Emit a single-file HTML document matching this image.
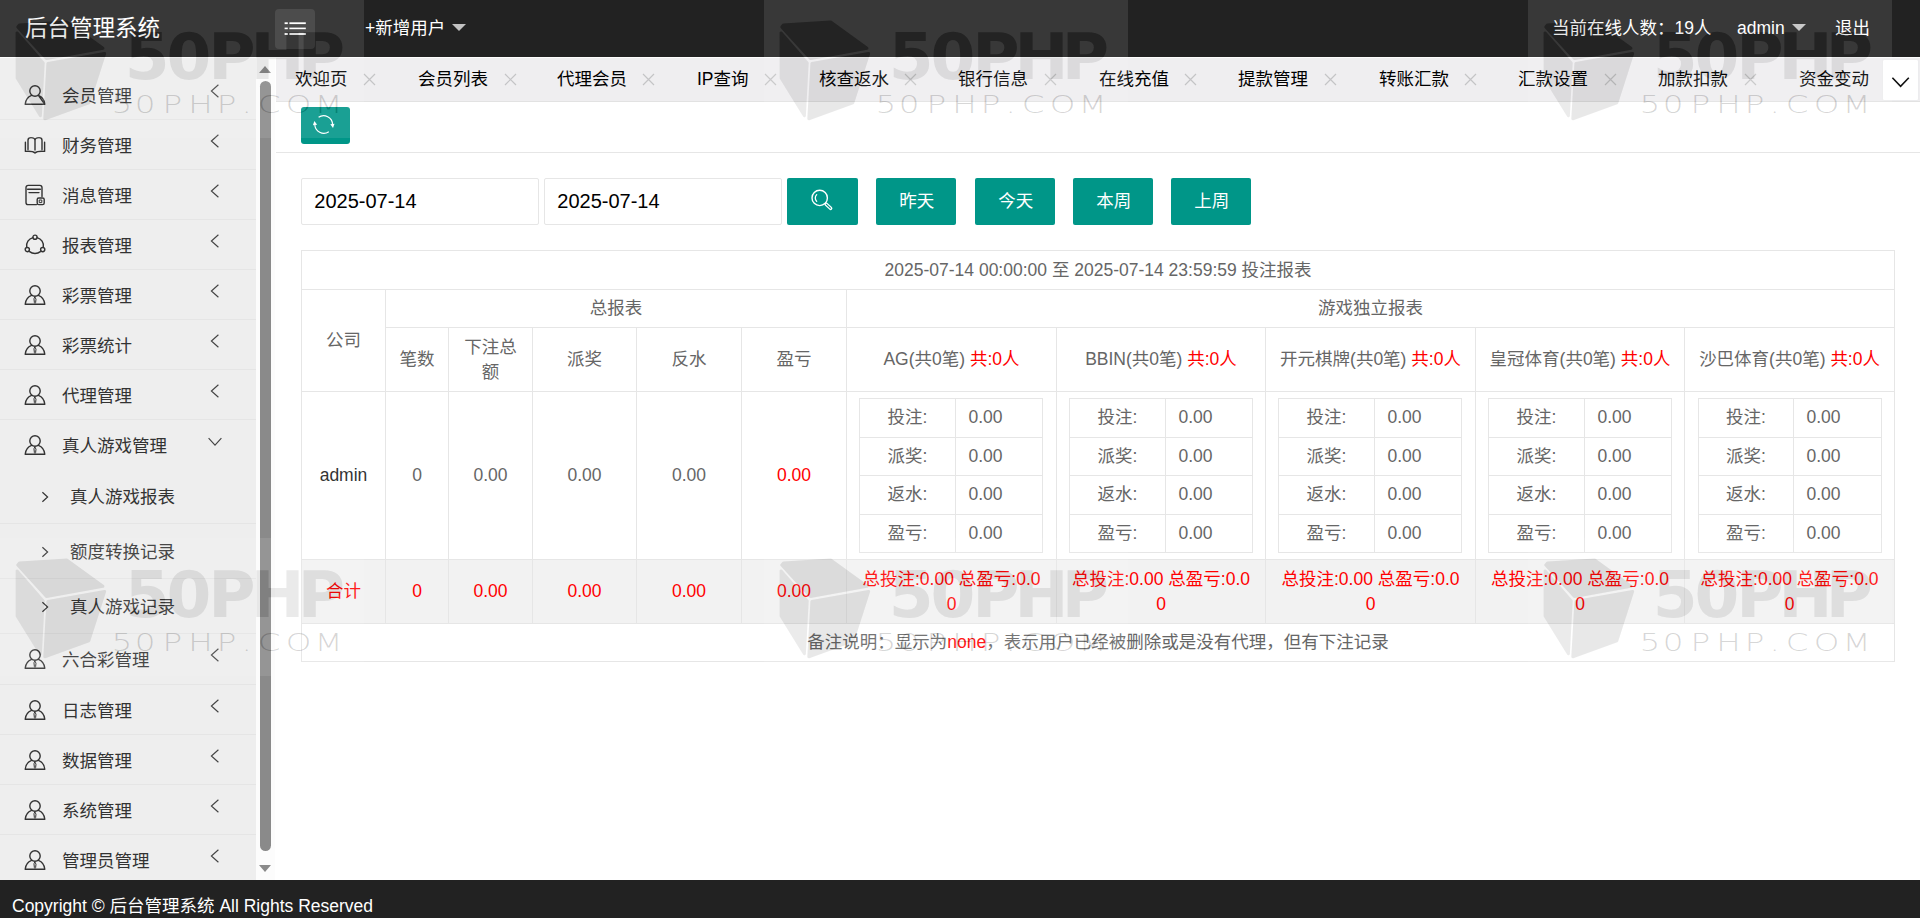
<!DOCTYPE html>
<html lang="zh-CN">
<head>
<meta charset="utf-8">
<title>后台管理系统</title>
<style>
*{box-sizing:border-box;margin:0;padding:0}
html,body{width:1920px;height:918px;overflow:hidden;background:#fff}
body{font-family:"Liberation Sans","Noto Sans CJK SC",sans-serif;font-size:17.5px;color:#333;position:relative}
ul{list-style:none}
/* header */
.hd{position:absolute;left:0;top:0;width:1920px;height:57px;background:#222;color:#fff}
.logo{position:absolute;left:25px;top:0;line-height:58px;font-size:22.5px;color:#fff;white-space:nowrap}
.ham{position:absolute;left:275px;top:9px;width:40px;height:40px;border-radius:4px;background:rgba(255,255,255,.1)}
.ham svg{position:absolute;left:0;top:0}
.hnav{position:absolute;top:0;line-height:56px;font-size:17.5px;color:#fff;white-space:nowrap}
.caret{position:absolute;width:0;height:0;border-left:7px solid transparent;border-right:7px solid transparent;border-top:7px solid #c2c2c2}
.hl{position:absolute;left:0;top:57px;width:1920px;height:1px;background:rgba(255,255,255,.85);z-index:5}
/* sidebar */
.side{position:absolute;left:0;top:57px;width:275px;height:823px;background:#eee;border-right:1px solid #e5e5e5}
.nav{position:absolute;left:0;top:13px;width:256px}
.nav>li{height:50px;border-bottom:1px solid #e5e5e5;position:relative}
.nav>li.open{height:auto}
.nav>li.open+li{height:51px}
.nav .it{height:49px;position:relative}
.nav .tx{position:absolute;left:62px;top:0;line-height:52px;font-size:17.5px;color:#333;white-space:nowrap}
.nav .ic{position:absolute;left:24px;top:13.5px}
.nav .ar{position:absolute;left:208px;top:12.8px}
.sub li{height:55px;border-bottom:1px solid #e5e5e5;position:relative}
.sub li:last-child{border-bottom:none;height:54px}
.sub .tx{left:70px;line-height:56px}
.sub .ar2{position:absolute;left:40px;top:21px}
/* scrollbar */
.sb{position:absolute;left:256px;top:0;width:19px;height:823px;background:#fcfcfc}
.sb .th{position:absolute;left:4px;top:24px;width:11px;height:770px;border-radius:5.5px;background:#8a8a8a}
.sb .up,.sb .dn{position:absolute;left:2.75px;width:0;height:0;border-left:6.75px solid transparent;border-right:6.75px solid transparent}
.sb .up{top:9px;border-bottom:7px solid #8a8a8a}
.sb .dn{top:808px;border-top:7px solid #8a8a8a}
/* tabs */
.tabs{position:absolute;left:276px;top:57px;width:1644px;height:45px;background:#efeef0;border-bottom:1px solid #e2e2e2;overflow:hidden}
.tabs .t{position:absolute;top:0;line-height:45px;font-size:17.5px;color:#000;white-space:nowrap}
.tabs .x{position:absolute;top:16px}
.tabs .more{position:absolute;left:1606px;top:2px;width:37px;height:42px;background:#fff;border:1px solid #ececee;border-radius:2px}
.tabs .more svg{position:absolute;left:-1px;top:-1px}
/* body */
.main{position:absolute;left:276px;top:102px;width:1644px;height:778px;background:#fff}
.btn{position:absolute;background:#009688;color:#fff;border-radius:2px;text-align:center;font-size:17.5px;line-height:47px;height:47px;top:76px}
.btn.t2{padding-left:1.5px}
.inp{position:absolute;top:76px;height:47px;width:238px;border:1px solid #e6e6e6;border-radius:2px;line-height:44px;padding-left:12.3px;font-size:20px;color:#000;background:#fff}
.hr{position:absolute;left:0;top:50px;width:1644px;height:1px;background:#e6e6e6}
/* table */
table{border-collapse:separate;border-spacing:0}
.tb{position:absolute;left:25px;top:148px;width:1594px;table-layout:fixed;color:#666;font-size:17.5px;text-align:center;border-left:1px solid #e6e6e6;border-top:1px solid #e6e6e6}
.tb td,.tb th{border-right:1px solid #e6e6e6;border-bottom:1px solid #e6e6e6;font-weight:normal;padding:0;line-height:25px;vertical-align:middle}
.tb .r1 td{height:39px}
.tb .r2 td{height:38px}
.tb .r3 td{height:64px}
.tb .r4>td{height:168px}
.tb .r5 td{height:64px}
.tb .r6 td{height:38px}
.red{color:#f00}
.dk{color:#333}
.in{margin:0 0 0 12px;width:184px;table-layout:fixed;border-left:1px solid #e6e6e6;border-top:1px solid #e6e6e6}
.in tr:nth-child(odd) td,.in tr:nth-child(odd) th{height:39px;padding-bottom:1px}
.in tr:nth-child(even) td,.in tr:nth-child(even) th{height:38px}
.in td{text-align:left;padding-left:12.5px !important}
.tb .r4>td:last-child .in{margin-left:13px}
.tot td{background:#f2f2f2;color:#f00}
/* footer */
.ft{position:absolute;left:0;top:880px;width:1920px;height:38px;background:#222;color:#fff;font-size:17.5px;line-height:52px;padding-left:12px;white-space:nowrap;overflow:hidden}
/* watermark */
.wm{position:absolute;width:364px;height:138px;pointer-events:none;overflow:hidden;z-index:50}
.wm svg{display:block}
</style>
</head>
<body>
<div class="hd">
  <div class="logo">后台管理系统</div>
  <div class="ham"><svg width="40" height="40" viewBox="0 0 40 40"><g fill="#fff"><rect x="9.6" y="13.3" width="3.2" height="1.8"/><rect x="14.4" y="13.3" width="16.4" height="1.8"/><rect x="9.6" y="18.6" width="3.2" height="1.6"/><rect x="14.4" y="18.6" width="16.4" height="1.6"/><rect x="9.6" y="24.1" width="3.2" height="1.8"/><rect x="14.4" y="24.1" width="16.4" height="1.8"/></g></svg></div>
  <div class="hnav" style="left:365px">+新增用户</div><i class="caret" style="left:452px;top:24px"></i>
  <div class="hnav" style="left:1552px">当前在线人数：19人</div>
  <div class="hnav" style="left:1737px">admin</div><i class="caret" style="left:1792px;top:24px"></i>
  <div class="hnav" style="left:1835px">退出</div>
</div>

<div class="hl"></div>
<div class="side">
  <ul class="nav">
<li><div class="it"><svg class="ic" width="22" height="22" viewBox="0 0 22 22"><g fill="none" stroke="#333" stroke-width="1.4" stroke-linecap="round" stroke-linejoin="round"><circle cx="11" cy="7" r="5.2"/><path d="M1.2 20.3 C1.6 15.4 4.6 12.6 7.6 11.4 M14.4 11.4 C17.4 12.6 20.4 15.4 20.8 20.3 Z M1.2 20.3 H20.8"/></g></svg><span class="tx">会员管理</span><svg class="ar" width="14" height="16" viewBox="0 0 14 16"><path d="M10.4 1.8 L3.4 8 L10.4 14.2" fill="none" stroke="#444" stroke-width="1.15"/></svg></div></li>
<li><div class="it"><svg class="ic" width="22" height="22" viewBox="0 0 22 22"><g fill="none" stroke="#333" stroke-width="1.4" stroke-linecap="round" stroke-linejoin="round"><path d="M4 15.5 V6.2 C4 4.6 5.4 3.6 7 3.6 C9 3.6 11 4.6 11 6.4 V16 M11 6.4 C11 4.6 13 3.6 15 3.6 C16.6 3.6 18 4.6 18 6.2 V15.5 M1.4 8.2 V17.4 C4.5 17.2 8.6 16.8 11 18.9 C13.4 16.8 17.5 17.2 20.6 17.4 V8.2"/></g></svg><span class="tx">财务管理</span><svg class="ar" width="14" height="16" viewBox="0 0 14 16"><path d="M10.4 1.8 L3.4 8 L10.4 14.2" fill="none" stroke="#444" stroke-width="1.15"/></svg></div></li>
<li><div class="it"><svg class="ic" width="22" height="22" viewBox="0 0 22 22"><g fill="none" stroke="#333" stroke-width="1.4" stroke-linecap="round" stroke-linejoin="round"><path d="M12.5 20.6 H4.2 C2.8 20.6 2 19.8 2 18.4 V3.6 C2 2.2 2.8 1.4 4.2 1.4 H15.8 C17.2 1.4 18 2.2 18 3.6 V12.5"/><path d="M3.6 5.2 H16.4 M5 8.6 H15"/><rect x="13.2" y="14" width="7" height="6.6" rx="1.6"/><path d="M15.6 16 h2.2 v2.6 h-2.2 z" stroke-width="1"/></g></svg><span class="tx">消息管理</span><svg class="ar" width="14" height="16" viewBox="0 0 14 16"><path d="M10.4 1.8 L3.4 8 L10.4 14.2" fill="none" stroke="#444" stroke-width="1.15"/></svg></div></li>
<li><div class="it"><svg class="ic" width="22" height="22" viewBox="0 0 22 22"><g fill="none" stroke="#333" stroke-width="1.4" stroke-linecap="round" stroke-linejoin="round"><path d="M8.9 3.6 A8.4 8.4 0 0 0 2.7 13.2 M5.6 17.6 A8.4 8.4 0 0 0 16.4 17.6 M19.3 13.2 A8.4 8.4 0 0 0 13.1 3.6"/><circle cx="11" cy="3.2" r="2.1"/><circle cx="3.3" cy="15.6" r="2.1"/><circle cx="18.7" cy="15.6" r="2.1"/></g></svg><span class="tx">报表管理</span><svg class="ar" width="14" height="16" viewBox="0 0 14 16"><path d="M10.4 1.8 L3.4 8 L10.4 14.2" fill="none" stroke="#444" stroke-width="1.15"/></svg></div></li>
<li><div class="it"><svg class="ic" width="22" height="22" viewBox="0 0 22 22"><g fill="none" stroke="#333" stroke-width="1.4" stroke-linecap="round" stroke-linejoin="round"><circle cx="11" cy="7" r="5.2"/><path d="M1.2 20.3 C1.6 15.4 4.6 12.6 7.6 11.4 M14.4 11.4 C17.4 12.6 20.4 15.4 20.8 20.3 M1.2 20.3 H20.8"/><path d="M11 13.2 L12 15.2 L11.6 18.6 L11 19.4 L10.4 18.6 L10 15.2 Z" stroke-width="1"/></g></svg><span class="tx">彩票管理</span><svg class="ar" width="14" height="16" viewBox="0 0 14 16"><path d="M10.4 1.8 L3.4 8 L10.4 14.2" fill="none" stroke="#444" stroke-width="1.15"/></svg></div></li>
<li><div class="it"><svg class="ic" width="22" height="22" viewBox="0 0 22 22"><g fill="none" stroke="#333" stroke-width="1.4" stroke-linecap="round" stroke-linejoin="round"><circle cx="11" cy="7" r="5.2"/><path d="M1.2 20.3 C1.6 15.4 4.6 12.6 7.6 11.4 M14.4 11.4 C17.4 12.6 20.4 15.4 20.8 20.3 M1.2 20.3 H20.8"/><path d="M11 13.2 L12 15.2 L11.6 18.6 L11 19.4 L10.4 18.6 L10 15.2 Z" stroke-width="1"/></g></svg><span class="tx">彩票统计</span><svg class="ar" width="14" height="16" viewBox="0 0 14 16"><path d="M10.4 1.8 L3.4 8 L10.4 14.2" fill="none" stroke="#444" stroke-width="1.15"/></svg></div></li>
<li><div class="it"><svg class="ic" width="22" height="22" viewBox="0 0 22 22"><g fill="none" stroke="#333" stroke-width="1.4" stroke-linecap="round" stroke-linejoin="round"><circle cx="11" cy="7" r="5.2"/><path d="M1.2 20.3 C1.6 15.4 4.6 12.6 7.6 11.4 M14.4 11.4 C17.4 12.6 20.4 15.4 20.8 20.3 M1.2 20.3 H20.8"/><path d="M11 13.2 L12 15.2 L11.6 18.6 L11 19.4 L10.4 18.6 L10 15.2 Z" stroke-width="1"/></g></svg><span class="tx">代理管理</span><svg class="ar" width="14" height="16" viewBox="0 0 14 16"><path d="M10.4 1.8 L3.4 8 L10.4 14.2" fill="none" stroke="#444" stroke-width="1.15"/></svg></div></li>
<li class="open"><div class="it"><svg class="ic" width="22" height="22" viewBox="0 0 22 22"><g fill="none" stroke="#333" stroke-width="1.4" stroke-linecap="round" stroke-linejoin="round"><circle cx="11" cy="7" r="5.2"/><path d="M1.2 20.3 C1.6 15.4 4.6 12.6 7.6 11.4 M14.4 11.4 C17.4 12.6 20.4 15.4 20.8 20.3 M1.2 20.3 H20.8"/><path d="M11 13.2 L12 15.2 L11.6 18.6 L11 19.4 L10.4 18.6 L10 15.2 Z" stroke-width="1"/></g></svg><span class="tx">真人游戏管理</span><svg class="ar" style="left:207px;top:16px" width="16" height="12" viewBox="0 0 16 12"><path d="M1.6 2.2 L8 9.2 L14.4 2.2" fill="none" stroke="#444" stroke-width="1.15"/></svg></div><ul class="sub"><li><svg class="ar2" width="10" height="14" viewBox="0 0 10 14"><path d="M2.4 2.2 L7.6 7 L2.4 11.8" fill="none" stroke="#333" stroke-width="1.2"/></svg><span class="tx">真人游戏报表</span></li><li><svg class="ar2" width="10" height="14" viewBox="0 0 10 14"><path d="M2.4 2.2 L7.6 7 L2.4 11.8" fill="none" stroke="#333" stroke-width="1.2"/></svg><span class="tx">额度转换记录</span></li><li><svg class="ar2" width="10" height="14" viewBox="0 0 10 14"><path d="M2.4 2.2 L7.6 7 L2.4 11.8" fill="none" stroke="#333" stroke-width="1.2"/></svg><span class="tx">真人游戏记录</span></li></ul></li>
<li><div class="it"><svg class="ic" width="22" height="22" viewBox="0 0 22 22"><g fill="none" stroke="#333" stroke-width="1.4" stroke-linecap="round" stroke-linejoin="round"><circle cx="11" cy="7" r="5.2"/><path d="M1.2 20.3 C1.6 15.4 4.6 12.6 7.6 11.4 M14.4 11.4 C17.4 12.6 20.4 15.4 20.8 20.3 M1.2 20.3 H20.8"/><path d="M11 13.2 L12 15.2 L11.6 18.6 L11 19.4 L10.4 18.6 L10 15.2 Z" stroke-width="1"/></g></svg><span class="tx">六合彩管理</span><svg class="ar" width="14" height="16" viewBox="0 0 14 16"><path d="M10.4 1.8 L3.4 8 L10.4 14.2" fill="none" stroke="#444" stroke-width="1.15"/></svg></div></li>
<li><div class="it"><svg class="ic" width="22" height="22" viewBox="0 0 22 22"><g fill="none" stroke="#333" stroke-width="1.4" stroke-linecap="round" stroke-linejoin="round"><circle cx="11" cy="7" r="5.2"/><path d="M1.2 20.3 C1.6 15.4 4.6 12.6 7.6 11.4 M14.4 11.4 C17.4 12.6 20.4 15.4 20.8 20.3 M1.2 20.3 H20.8"/><path d="M11 13.2 L12 15.2 L11.6 18.6 L11 19.4 L10.4 18.6 L10 15.2 Z" stroke-width="1"/></g></svg><span class="tx">日志管理</span><svg class="ar" width="14" height="16" viewBox="0 0 14 16"><path d="M10.4 1.8 L3.4 8 L10.4 14.2" fill="none" stroke="#444" stroke-width="1.15"/></svg></div></li>
<li><div class="it"><svg class="ic" width="22" height="22" viewBox="0 0 22 22"><g fill="none" stroke="#333" stroke-width="1.4" stroke-linecap="round" stroke-linejoin="round"><circle cx="11" cy="7" r="5.2"/><path d="M1.2 20.3 C1.6 15.4 4.6 12.6 7.6 11.4 M14.4 11.4 C17.4 12.6 20.4 15.4 20.8 20.3 M1.2 20.3 H20.8"/><path d="M11 13.2 L12 15.2 L11.6 18.6 L11 19.4 L10.4 18.6 L10 15.2 Z" stroke-width="1"/></g></svg><span class="tx">数据管理</span><svg class="ar" width="14" height="16" viewBox="0 0 14 16"><path d="M10.4 1.8 L3.4 8 L10.4 14.2" fill="none" stroke="#444" stroke-width="1.15"/></svg></div></li>
<li><div class="it"><svg class="ic" width="22" height="22" viewBox="0 0 22 22"><g fill="none" stroke="#333" stroke-width="1.4" stroke-linecap="round" stroke-linejoin="round"><circle cx="11" cy="7" r="5.2"/><path d="M1.2 20.3 C1.6 15.4 4.6 12.6 7.6 11.4 M14.4 11.4 C17.4 12.6 20.4 15.4 20.8 20.3 M1.2 20.3 H20.8"/><path d="M11 13.2 L12 15.2 L11.6 18.6 L11 19.4 L10.4 18.6 L10 15.2 Z" stroke-width="1"/></g></svg><span class="tx">系统管理</span><svg class="ar" width="14" height="16" viewBox="0 0 14 16"><path d="M10.4 1.8 L3.4 8 L10.4 14.2" fill="none" stroke="#444" stroke-width="1.15"/></svg></div></li>
<li><div class="it"><svg class="ic" width="22" height="22" viewBox="0 0 22 22"><g fill="none" stroke="#333" stroke-width="1.4" stroke-linecap="round" stroke-linejoin="round"><circle cx="11" cy="7" r="5.2"/><path d="M1.2 20.3 C1.6 15.4 4.6 12.6 7.6 11.4 M14.4 11.4 C17.4 12.6 20.4 15.4 20.8 20.3 M1.2 20.3 H20.8"/><path d="M11 13.2 L12 15.2 L11.6 18.6 L11 19.4 L10.4 18.6 L10 15.2 Z" stroke-width="1"/></g></svg><span class="tx">管理员管理</span><svg class="ar" width="14" height="16" viewBox="0 0 14 16"><path d="M10.4 1.8 L3.4 8 L10.4 14.2" fill="none" stroke="#444" stroke-width="1.15"/></svg></div></li>
</ul>
  <div class="sb"><i class="up"></i><div class="th"></div><i class="dn"></i></div>
</div>

<div class="tabs">
<span class="t" style="left:19px">欢迎页</span>
<svg class="x" style="left:87px" width="13" height="13" viewBox="0 0 13 13"><path d="M1 1 L12 12 M12 1 L1 12" stroke="#c4c4c6" stroke-width="1.2" fill="none"/></svg>
<span class="t" style="left:142px">会员列表</span>
<svg class="x" style="left:228px" width="13" height="13" viewBox="0 0 13 13"><path d="M1 1 L12 12 M12 1 L1 12" stroke="#c4c4c6" stroke-width="1.2" fill="none"/></svg>
<span class="t" style="left:281px">代理会员</span>
<svg class="x" style="left:366px" width="13" height="13" viewBox="0 0 13 13"><path d="M1 1 L12 12 M12 1 L1 12" stroke="#c4c4c6" stroke-width="1.2" fill="none"/></svg>
<span class="t" style="left:421px">IP查询</span>
<svg class="x" style="left:488px" width="13" height="13" viewBox="0 0 13 13"><path d="M1 1 L12 12 M12 1 L1 12" stroke="#c4c4c6" stroke-width="1.2" fill="none"/></svg>
<span class="t" style="left:543px">核查返水</span>
<svg class="x" style="left:628px" width="13" height="13" viewBox="0 0 13 13"><path d="M1 1 L12 12 M12 1 L1 12" stroke="#c4c4c6" stroke-width="1.2" fill="none"/></svg>
<span class="t" style="left:682px">银行信息</span>
<svg class="x" style="left:768px" width="13" height="13" viewBox="0 0 13 13"><path d="M1 1 L12 12 M12 1 L1 12" stroke="#c4c4c6" stroke-width="1.2" fill="none"/></svg>
<span class="t" style="left:823px">在线充值</span>
<svg class="x" style="left:908px" width="13" height="13" viewBox="0 0 13 13"><path d="M1 1 L12 12 M12 1 L1 12" stroke="#c4c4c6" stroke-width="1.2" fill="none"/></svg>
<span class="t" style="left:962px">提款管理</span>
<svg class="x" style="left:1048px" width="13" height="13" viewBox="0 0 13 13"><path d="M1 1 L12 12 M12 1 L1 12" stroke="#c4c4c6" stroke-width="1.2" fill="none"/></svg>
<span class="t" style="left:1103px">转账汇款</span>
<svg class="x" style="left:1188px" width="13" height="13" viewBox="0 0 13 13"><path d="M1 1 L12 12 M12 1 L1 12" stroke="#c4c4c6" stroke-width="1.2" fill="none"/></svg>
<span class="t" style="left:1242px">汇款设置</span>
<svg class="x" style="left:1328px" width="13" height="13" viewBox="0 0 13 13"><path d="M1 1 L12 12 M12 1 L1 12" stroke="#c4c4c6" stroke-width="1.2" fill="none"/></svg>
<span class="t" style="left:1382px">加款扣款</span>
<svg class="x" style="left:1468px" width="13" height="13" viewBox="0 0 13 13"><path d="M1 1 L12 12 M12 1 L1 12" stroke="#c4c4c6" stroke-width="1.2" fill="none"/></svg>
<span class="t" style="left:1523px">资金变动</span>
<div class="more"><svg width="37" height="42" viewBox="0 0 37 42"><path d="M10.4 18.8 L18.6 27.4 L26.8 18.8" fill="none" stroke="#111" stroke-width="1.6"/></svg></div>
</div>

<div class="main">
  <div class="btn" style="left:25px;top:5px;width:49px;height:37px;border-radius:3px"><svg width="49" height="37" viewBox="0 0 49 37" style="display:block"><g fill="none" stroke="#fff" stroke-width="1.2"><path d="M17.6 10.2 A9 9 0 0 1 31.6 17.4"/><path d="M27.8 24.8 A9 9 0 0 1 13.8 17.6"/></g><g fill="#fff"><path d="M29.3 17.3 L33.5 16.7 L32 21 Z"/><path d="M16.1 17.7 L11.9 18.3 L13.4 14 Z"/></g></svg></div>
  <div class="hr"></div>
  <div class="inp" style="left:25px">2025-07-14</div>
  <div class="inp" style="left:268px">2025-07-14</div>
  <div class="btn" style="left:511px;width:71px"><svg width="71" height="47" viewBox="0 0 71 47" style="display:block"><g fill="none" stroke="#fff" stroke-linecap="round"><circle cx="32.7" cy="19.9" r="7.7" stroke-width="1.4"/><path d="M29.7 16.6 A4.8 4.8 0 0 0 29.7 23.4" stroke-width="1.3"/><path d="M39.2 26.2 L43.6 30.3" stroke-width="3.6"/><path d="M39.4 26.4 L43.4 30.1" stroke-width="1.2" stroke="#009688"/></g></svg></div>
  <div class="btn t2" style="left:600px;width:80px">昨天</div>
  <div class="btn t2" style="left:699px;width:80px">今天</div>
  <div class="btn t2" style="left:797px;width:80px">本周</div>
  <div class="btn t2" style="left:895px;width:80px">上周</div>
  <table class="tb"><colgroup><col style="width:84px"><col style="width:63px"><col style="width:84px"><col style="width:104px"><col style="width:105px"><col style="width:105px"><col style="width:210px"><col style="width:209px"><col style="width:210px"><col style="width:209px"><col style="width:210px"></colgroup>
<tr class="r1"><td colspan="11">2025-07-14 00:00:00 至 2025-07-14 23:59:59 投注报表</td></tr>
<tr class="r2"><td rowspan="2">公司</td><td colspan="5">总报表</td><td colspan="5">游戏独立报表</td></tr>
<tr class="r3"><td>笔数</td><td>下注总<br>额</td><td>派奖</td><td>反水</td><td>盈亏</td><td>AG(共0笔) <span class="red">共:0人</span></td><td>BBIN(共0笔) <span class="red">共:0人</span></td><td>开元棋牌(共0笔) <span class="red">共:0人</span></td><td>皇冠体育(共0笔) <span class="red">共:0人</span></td><td>沙巴体育(共0笔) <span class="red">共:0人</span></td></tr>
<tr class="r4"><td class="dk">admin</td><td>0</td><td>0.00</td><td>0.00</td><td>0.00</td><td class="red">0.00</td><td><table class="in"><colgroup><col style="width:96px"><col style="width:87px"></colgroup><tr><th>投注:</th><td>0.00</td></tr><tr><th>派奖:</th><td>0.00</td></tr><tr><th>返水:</th><td>0.00</td></tr><tr><th>盈亏:</th><td>0.00</td></tr></table></td><td><table class="in"><colgroup><col style="width:96px"><col style="width:87px"></colgroup><tr><th>投注:</th><td>0.00</td></tr><tr><th>派奖:</th><td>0.00</td></tr><tr><th>返水:</th><td>0.00</td></tr><tr><th>盈亏:</th><td>0.00</td></tr></table></td><td><table class="in"><colgroup><col style="width:96px"><col style="width:87px"></colgroup><tr><th>投注:</th><td>0.00</td></tr><tr><th>派奖:</th><td>0.00</td></tr><tr><th>返水:</th><td>0.00</td></tr><tr><th>盈亏:</th><td>0.00</td></tr></table></td><td><table class="in"><colgroup><col style="width:96px"><col style="width:87px"></colgroup><tr><th>投注:</th><td>0.00</td></tr><tr><th>派奖:</th><td>0.00</td></tr><tr><th>返水:</th><td>0.00</td></tr><tr><th>盈亏:</th><td>0.00</td></tr></table></td><td><table class="in"><colgroup><col style="width:95px"><col style="width:88px"></colgroup><tr><th>投注:</th><td>0.00</td></tr><tr><th>派奖:</th><td>0.00</td></tr><tr><th>返水:</th><td>0.00</td></tr><tr><th>盈亏:</th><td>0.00</td></tr></table></td></tr>
<tr class="r5 tot"><td>合计</td><td>0</td><td>0.00</td><td>0.00</td><td>0.00</td><td>0.00</td><td>总投注:0.00 总盈亏:0.0<br>0</td><td>总投注:0.00 总盈亏:0.0<br>0</td><td>总投注:0.00 总盈亏:0.0<br>0</td><td>总投注:0.00 总盈亏:0.0<br>0</td><td>总投注:0.00 总盈亏:0.0<br>0</td></tr>
<tr class="r6"><td colspan="11">备注说明：显示为<span class="red">none</span>，表示用户已经被删除或是没有代理，但有下注记录</td></tr>
</table>
</div>

<div class="ft">Copyright © 后台管理系统 All Rights Reserved</div>
<div class="wm" style="left:0px;top:0px"><svg width="364" height="138" viewBox="0 0 364 138">
<defs><mask id="wmk0"><rect width="364" height="138" fill="#fff"/><polygon points="19.5,24.9 17.8,26.9 46.5,58.4 102.9,48.3 67.0,22.1" fill="#000" stroke="#000" stroke-width="3" stroke-linejoin="round" opacity="1"/><polygon points="17.1,33.0 17.1,78.0 40.4,115.7 43.2,62.9" fill="#000" stroke="#000" stroke-width="3" stroke-linejoin="round" opacity="1"/><polygon points="47.9,63.5 44.8,118.8 88.8,102.8 104.6,53.5" fill="#000" stroke="#000" stroke-width="3" stroke-linejoin="round" opacity="1"/><text x="124.8 166.6 208.2 250.6 297.8" y="79.3" font-family="DejaVu Sans, Liberation Sans, sans-serif" font-weight="bold" font-size="64.5" fill="#000" fill-opacity="1">50PHP</text>
<text transform="scale(1.3,1)" x="85.7 103.6 125.1 144.8 166.7 185.8 198.2 219.8 242" y="113.2" font-family="DejaVu Sans, Liberation Sans, sans-serif" font-weight="200" font-size="25.1" fill="#000" fill-opacity="1">50PHP.COM</text></mask></defs>
<rect width="364" height="138" fill="#fff" fill-opacity=".1" mask="url(#wmk0)"/>
<polygon points="19.5,24.9 17.8,26.9 46.5,58.4 102.9,48.3 67.0,22.1" fill="#2d2d2d" stroke="#2d2d2d" stroke-width="3" stroke-linejoin="round" opacity="0.11"/><polygon points="17.1,33.0 17.1,78.0 40.4,115.7 43.2,62.9" fill="#2d2d2d" stroke="#2d2d2d" stroke-width="3" stroke-linejoin="round" opacity="0.09"/><polygon points="47.9,63.5 44.8,118.8 88.8,102.8 104.6,53.5" fill="#2d2d2d" stroke="#2d2d2d" stroke-width="3" stroke-linejoin="round" opacity="0.1"/><text x="124.8 166.6 208.2 250.6 297.8" y="79.3" font-family="DejaVu Sans, Liberation Sans, sans-serif" font-weight="bold" font-size="64.5" fill="#2d2d2d" fill-opacity="0.1">50PHP</text>
<text transform="scale(1.3,1)" x="85.7 103.6 125.1 144.8 166.7 185.8 198.2 219.8 242" y="113.2" font-family="DejaVu Sans, Liberation Sans, sans-serif" font-weight="200" font-size="25.1" fill="#2d2d2d" fill-opacity="0.2">50PHP.COM</text>
</svg></div><div class="wm" style="left:764px;top:0px"><svg width="364" height="138" viewBox="0 0 364 138">
<defs><mask id="wmk1"><rect width="364" height="138" fill="#fff"/><polygon points="19.5,24.9 17.8,26.9 46.5,58.4 102.9,48.3 67.0,22.1" fill="#000" stroke="#000" stroke-width="3" stroke-linejoin="round" opacity="1"/><polygon points="17.1,33.0 17.1,78.0 40.4,115.7 43.2,62.9" fill="#000" stroke="#000" stroke-width="3" stroke-linejoin="round" opacity="1"/><polygon points="47.9,63.5 44.8,118.8 88.8,102.8 104.6,53.5" fill="#000" stroke="#000" stroke-width="3" stroke-linejoin="round" opacity="1"/><text x="124.8 166.6 208.2 250.6 297.8" y="79.3" font-family="DejaVu Sans, Liberation Sans, sans-serif" font-weight="bold" font-size="64.5" fill="#000" fill-opacity="1">50PHP</text>
<text transform="scale(1.3,1)" x="85.7 103.6 125.1 144.8 166.7 185.8 198.2 219.8 242" y="113.2" font-family="DejaVu Sans, Liberation Sans, sans-serif" font-weight="200" font-size="25.1" fill="#000" fill-opacity="1">50PHP.COM</text></mask></defs>
<rect width="364" height="138" fill="#fff" fill-opacity=".1" mask="url(#wmk1)"/>
<polygon points="19.5,24.9 17.8,26.9 46.5,58.4 102.9,48.3 67.0,22.1" fill="#2d2d2d" stroke="#2d2d2d" stroke-width="3" stroke-linejoin="round" opacity="0.11"/><polygon points="17.1,33.0 17.1,78.0 40.4,115.7 43.2,62.9" fill="#2d2d2d" stroke="#2d2d2d" stroke-width="3" stroke-linejoin="round" opacity="0.09"/><polygon points="47.9,63.5 44.8,118.8 88.8,102.8 104.6,53.5" fill="#2d2d2d" stroke="#2d2d2d" stroke-width="3" stroke-linejoin="round" opacity="0.1"/><text x="124.8 166.6 208.2 250.6 297.8" y="79.3" font-family="DejaVu Sans, Liberation Sans, sans-serif" font-weight="bold" font-size="64.5" fill="#2d2d2d" fill-opacity="0.1">50PHP</text>
<text transform="scale(1.3,1)" x="85.7 103.6 125.1 144.8 166.7 185.8 198.2 219.8 242" y="113.2" font-family="DejaVu Sans, Liberation Sans, sans-serif" font-weight="200" font-size="25.1" fill="#2d2d2d" fill-opacity="0.2">50PHP.COM</text>
</svg></div><div class="wm" style="left:1528px;top:0px"><svg width="364" height="138" viewBox="0 0 364 138">
<defs><mask id="wmk2"><rect width="364" height="138" fill="#fff"/><polygon points="19.5,24.9 17.8,26.9 46.5,58.4 102.9,48.3 67.0,22.1" fill="#000" stroke="#000" stroke-width="3" stroke-linejoin="round" opacity="1"/><polygon points="17.1,33.0 17.1,78.0 40.4,115.7 43.2,62.9" fill="#000" stroke="#000" stroke-width="3" stroke-linejoin="round" opacity="1"/><polygon points="47.9,63.5 44.8,118.8 88.8,102.8 104.6,53.5" fill="#000" stroke="#000" stroke-width="3" stroke-linejoin="round" opacity="1"/><text x="124.8 166.6 208.2 250.6 297.8" y="79.3" font-family="DejaVu Sans, Liberation Sans, sans-serif" font-weight="bold" font-size="64.5" fill="#000" fill-opacity="1">50PHP</text>
<text transform="scale(1.3,1)" x="85.7 103.6 125.1 144.8 166.7 185.8 198.2 219.8 242" y="113.2" font-family="DejaVu Sans, Liberation Sans, sans-serif" font-weight="200" font-size="25.1" fill="#000" fill-opacity="1">50PHP.COM</text></mask></defs>
<rect width="364" height="138" fill="#fff" fill-opacity=".1" mask="url(#wmk2)"/>
<polygon points="19.5,24.9 17.8,26.9 46.5,58.4 102.9,48.3 67.0,22.1" fill="#2d2d2d" stroke="#2d2d2d" stroke-width="3" stroke-linejoin="round" opacity="0.11"/><polygon points="17.1,33.0 17.1,78.0 40.4,115.7 43.2,62.9" fill="#2d2d2d" stroke="#2d2d2d" stroke-width="3" stroke-linejoin="round" opacity="0.09"/><polygon points="47.9,63.5 44.8,118.8 88.8,102.8 104.6,53.5" fill="#2d2d2d" stroke="#2d2d2d" stroke-width="3" stroke-linejoin="round" opacity="0.1"/><text x="124.8 166.6 208.2 250.6 297.8" y="79.3" font-family="DejaVu Sans, Liberation Sans, sans-serif" font-weight="bold" font-size="64.5" fill="#2d2d2d" fill-opacity="0.1">50PHP</text>
<text transform="scale(1.3,1)" x="85.7 103.6 125.1 144.8 166.7 185.8 198.2 219.8 242" y="113.2" font-family="DejaVu Sans, Liberation Sans, sans-serif" font-weight="200" font-size="25.1" fill="#2d2d2d" fill-opacity="0.2">50PHP.COM</text>
</svg></div><div class="wm" style="left:0px;top:538px"><svg width="364" height="138" viewBox="0 0 364 138">
<defs><mask id="wmk3"><rect width="364" height="138" fill="#fff"/><polygon points="19.5,24.9 17.8,26.9 46.5,58.4 102.9,48.3 67.0,22.1" fill="#000" stroke="#000" stroke-width="3" stroke-linejoin="round" opacity="1"/><polygon points="17.1,33.0 17.1,78.0 40.4,115.7 43.2,62.9" fill="#000" stroke="#000" stroke-width="3" stroke-linejoin="round" opacity="1"/><polygon points="47.9,63.5 44.8,118.8 88.8,102.8 104.6,53.5" fill="#000" stroke="#000" stroke-width="3" stroke-linejoin="round" opacity="1"/><text x="124.8 166.6 208.2 250.6 297.8" y="79.3" font-family="DejaVu Sans, Liberation Sans, sans-serif" font-weight="bold" font-size="64.5" fill="#000" fill-opacity="1">50PHP</text>
<text transform="scale(1.3,1)" x="85.7 103.6 125.1 144.8 166.7 185.8 198.2 219.8 242" y="113.2" font-family="DejaVu Sans, Liberation Sans, sans-serif" font-weight="200" font-size="25.1" fill="#000" fill-opacity="1">50PHP.COM</text></mask></defs>
<rect width="364" height="138" fill="#fff" fill-opacity=".1" mask="url(#wmk3)"/>
<polygon points="19.5,24.9 17.8,26.9 46.5,58.4 102.9,48.3 67.0,22.1" fill="#2d2d2d" stroke="#2d2d2d" stroke-width="3" stroke-linejoin="round" opacity="0.11"/><polygon points="17.1,33.0 17.1,78.0 40.4,115.7 43.2,62.9" fill="#2d2d2d" stroke="#2d2d2d" stroke-width="3" stroke-linejoin="round" opacity="0.09"/><polygon points="47.9,63.5 44.8,118.8 88.8,102.8 104.6,53.5" fill="#2d2d2d" stroke="#2d2d2d" stroke-width="3" stroke-linejoin="round" opacity="0.1"/><text x="124.8 166.6 208.2 250.6 297.8" y="79.3" font-family="DejaVu Sans, Liberation Sans, sans-serif" font-weight="bold" font-size="64.5" fill="#2d2d2d" fill-opacity="0.1">50PHP</text>
<text transform="scale(1.3,1)" x="85.7 103.6 125.1 144.8 166.7 185.8 198.2 219.8 242" y="113.2" font-family="DejaVu Sans, Liberation Sans, sans-serif" font-weight="200" font-size="25.1" fill="#2d2d2d" fill-opacity="0.2">50PHP.COM</text>
</svg></div><div class="wm" style="left:764px;top:538px"><svg width="364" height="138" viewBox="0 0 364 138">
<defs><mask id="wmk4"><rect width="364" height="138" fill="#fff"/><polygon points="19.5,24.9 17.8,26.9 46.5,58.4 102.9,48.3 67.0,22.1" fill="#000" stroke="#000" stroke-width="3" stroke-linejoin="round" opacity="1"/><polygon points="17.1,33.0 17.1,78.0 40.4,115.7 43.2,62.9" fill="#000" stroke="#000" stroke-width="3" stroke-linejoin="round" opacity="1"/><polygon points="47.9,63.5 44.8,118.8 88.8,102.8 104.6,53.5" fill="#000" stroke="#000" stroke-width="3" stroke-linejoin="round" opacity="1"/><text x="124.8 166.6 208.2 250.6 297.8" y="79.3" font-family="DejaVu Sans, Liberation Sans, sans-serif" font-weight="bold" font-size="64.5" fill="#000" fill-opacity="1">50PHP</text>
<text transform="scale(1.3,1)" x="85.7 103.6 125.1 144.8 166.7 185.8 198.2 219.8 242" y="113.2" font-family="DejaVu Sans, Liberation Sans, sans-serif" font-weight="200" font-size="25.1" fill="#000" fill-opacity="1">50PHP.COM</text></mask></defs>
<rect width="364" height="138" fill="#fff" fill-opacity=".1" mask="url(#wmk4)"/>
<polygon points="19.5,24.9 17.8,26.9 46.5,58.4 102.9,48.3 67.0,22.1" fill="#2d2d2d" stroke="#2d2d2d" stroke-width="3" stroke-linejoin="round" opacity="0.11"/><polygon points="17.1,33.0 17.1,78.0 40.4,115.7 43.2,62.9" fill="#2d2d2d" stroke="#2d2d2d" stroke-width="3" stroke-linejoin="round" opacity="0.09"/><polygon points="47.9,63.5 44.8,118.8 88.8,102.8 104.6,53.5" fill="#2d2d2d" stroke="#2d2d2d" stroke-width="3" stroke-linejoin="round" opacity="0.1"/><text x="124.8 166.6 208.2 250.6 297.8" y="79.3" font-family="DejaVu Sans, Liberation Sans, sans-serif" font-weight="bold" font-size="64.5" fill="#2d2d2d" fill-opacity="0.1">50PHP</text>
<text transform="scale(1.3,1)" x="85.7 103.6 125.1 144.8 166.7 185.8 198.2 219.8 242" y="113.2" font-family="DejaVu Sans, Liberation Sans, sans-serif" font-weight="200" font-size="25.1" fill="#2d2d2d" fill-opacity="0.2">50PHP.COM</text>
</svg></div><div class="wm" style="left:1528px;top:538px"><svg width="364" height="138" viewBox="0 0 364 138">
<defs><mask id="wmk5"><rect width="364" height="138" fill="#fff"/><polygon points="19.5,24.9 17.8,26.9 46.5,58.4 102.9,48.3 67.0,22.1" fill="#000" stroke="#000" stroke-width="3" stroke-linejoin="round" opacity="1"/><polygon points="17.1,33.0 17.1,78.0 40.4,115.7 43.2,62.9" fill="#000" stroke="#000" stroke-width="3" stroke-linejoin="round" opacity="1"/><polygon points="47.9,63.5 44.8,118.8 88.8,102.8 104.6,53.5" fill="#000" stroke="#000" stroke-width="3" stroke-linejoin="round" opacity="1"/><text x="124.8 166.6 208.2 250.6 297.8" y="79.3" font-family="DejaVu Sans, Liberation Sans, sans-serif" font-weight="bold" font-size="64.5" fill="#000" fill-opacity="1">50PHP</text>
<text transform="scale(1.3,1)" x="85.7 103.6 125.1 144.8 166.7 185.8 198.2 219.8 242" y="113.2" font-family="DejaVu Sans, Liberation Sans, sans-serif" font-weight="200" font-size="25.1" fill="#000" fill-opacity="1">50PHP.COM</text></mask></defs>
<rect width="364" height="138" fill="#fff" fill-opacity=".1" mask="url(#wmk5)"/>
<polygon points="19.5,24.9 17.8,26.9 46.5,58.4 102.9,48.3 67.0,22.1" fill="#2d2d2d" stroke="#2d2d2d" stroke-width="3" stroke-linejoin="round" opacity="0.11"/><polygon points="17.1,33.0 17.1,78.0 40.4,115.7 43.2,62.9" fill="#2d2d2d" stroke="#2d2d2d" stroke-width="3" stroke-linejoin="round" opacity="0.09"/><polygon points="47.9,63.5 44.8,118.8 88.8,102.8 104.6,53.5" fill="#2d2d2d" stroke="#2d2d2d" stroke-width="3" stroke-linejoin="round" opacity="0.1"/><text x="124.8 166.6 208.2 250.6 297.8" y="79.3" font-family="DejaVu Sans, Liberation Sans, sans-serif" font-weight="bold" font-size="64.5" fill="#2d2d2d" fill-opacity="0.1">50PHP</text>
<text transform="scale(1.3,1)" x="85.7 103.6 125.1 144.8 166.7 185.8 198.2 219.8 242" y="113.2" font-family="DejaVu Sans, Liberation Sans, sans-serif" font-weight="200" font-size="25.1" fill="#2d2d2d" fill-opacity="0.2">50PHP.COM</text>
</svg></div>
</body>
</html>
